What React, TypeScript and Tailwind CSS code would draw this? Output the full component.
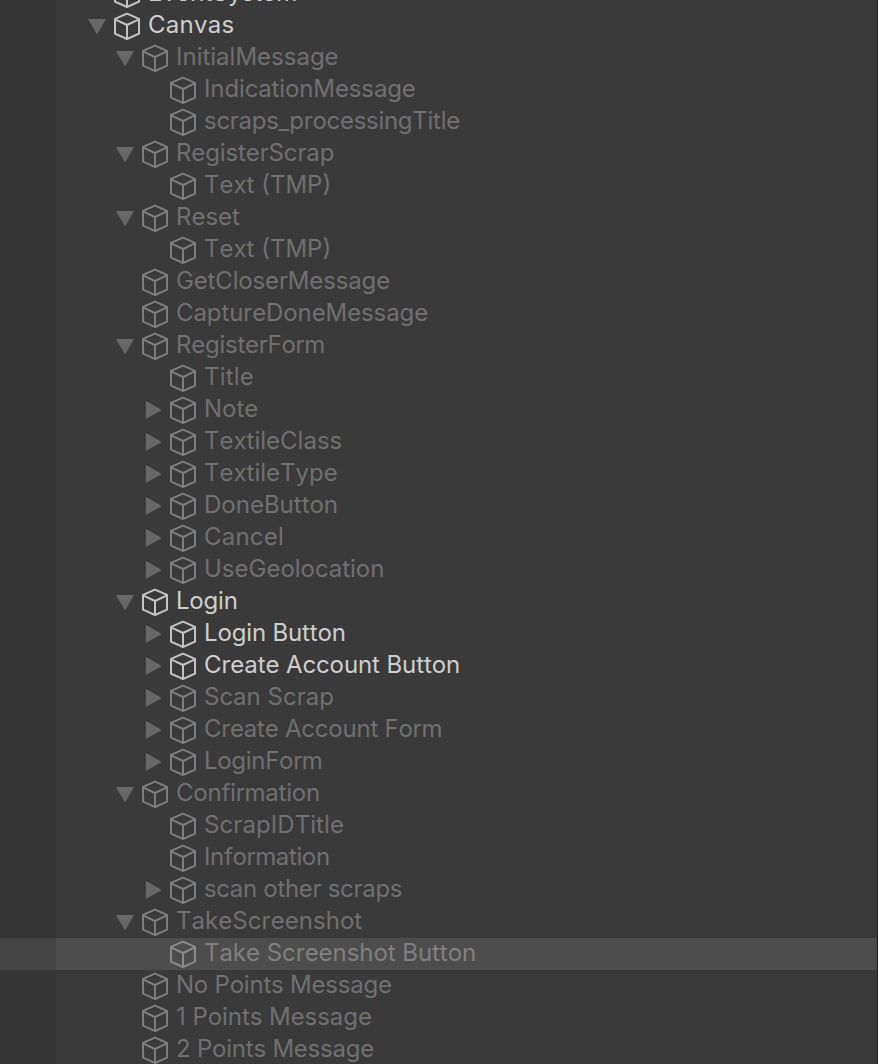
type Arrow = 'down' | 'right' | 'none';

interface Item {
  name: string;
  depth: 0 | 1 | 2;
  arrow?: Arrow;
  active?: boolean;
  selected?: boolean;
  tracking?: string;
}

const items: Item[] = [
  { name: 'EventSystem', depth: 0, active: true, tracking: 'tracking-[0.1px]' },
  { name: 'Canvas', depth: 0, arrow: 'down', active: true, tracking: 'tracking-[0.25px]' },
  { name: 'InitialMessage', depth: 1, arrow: 'down' },
  { name: 'IndicationMessage', depth: 2, tracking: 'tracking-[-0.12px]' },
  { name: 'scraps_processingTitle', depth: 2, tracking: 'tracking-[-0.28px]' },
  { name: 'RegisterScrap', depth: 1, arrow: 'down', tracking: 'tracking-[-0.12px]' },
  { name: 'Text (TMP)', depth: 2 },
  { name: 'Reset', depth: 1, arrow: 'down' },
  { name: 'Text (TMP)', depth: 2 },
  { name: 'GetCloserMessage', depth: 1, tracking: 'tracking-[-0.15px]' },
  { name: 'CaptureDoneMessage', depth: 1, tracking: 'tracking-[-0.1px]' },
  { name: 'RegisterForm', depth: 1, arrow: 'down', tracking: 'tracking-[-0.25px]' },
  { name: 'Title', depth: 2, tracking: 'tracking-[0.2px]' },
  { name: 'Note', depth: 2, arrow: 'right' },
  { name: 'TextileClass', depth: 2, arrow: 'right' },
  { name: 'TextileType', depth: 2, arrow: 'right' },
  { name: 'DoneButton', depth: 2, arrow: 'right' },
  { name: 'Cancel', depth: 2, arrow: 'right', tracking: 'tracking-[0.2px]' },
  { name: 'UseGeolocation', depth: 2, arrow: 'right' },
  { name: 'Login', depth: 1, arrow: 'down', active: true, tracking: 'tracking-[-0.2px]' },
  { name: 'Login Button', depth: 2, arrow: 'right', active: true, tracking: 'tracking-[-0.15px]' },
  { name: 'Create Account Button', depth: 2, arrow: 'right', active: true, tracking: 'tracking-[-0.1px]' },
  { name: 'Scan Scrap', depth: 2, arrow: 'right' },
  { name: 'Create Account Form', depth: 2, arrow: 'right', tracking: 'tracking-[-0.23px]' },
  { name: 'LoginForm', depth: 2, arrow: 'right', tracking: 'tracking-[-0.3px]' },
  { name: 'Confirmation', depth: 1, arrow: 'down', tracking: 'tracking-[-0.22px]' },
  { name: 'ScrapIDTitle', depth: 2, tracking: 'tracking-[0.08px]' },
  { name: 'Information', depth: 2, tracking: 'tracking-[-0.36px]' },
  { name: 'scan other scraps', depth: 2, arrow: 'right', tracking: 'tracking-[-0.3px]' },
  { name: 'TakeScreenshot', depth: 1, arrow: 'down', tracking: 'tracking-[0.05px]' },
  { name: 'Take Screenshot Button', depth: 2, selected: true, tracking: 'tracking-[-0.05px]' },
  { name: 'No Points Message', depth: 1, tracking: 'tracking-[-0.22px]' },
  { name: '1 Points Message', depth: 1, tracking: 'tracking-[-0.05px]' },
  { name: '2 Points Message', depth: 1, tracking: 'tracking-[-0.22px]' },
];

const indent = ['pl-8', 'pl-[60px]', 'pl-[88px]'];

function Foldout({ arrow }: { arrow: Arrow }) {
  return (
    <svg className="h-8 w-[26px] shrink-0 fill-[#686868]" viewBox="0 0 26 32">
      {arrow === 'down' && <path d="M0 9H18L9 24.6Z" />}
      {arrow === 'right' && <path d="M1.8 6.8V25L17.7 15.9Z" />}
    </svg>
  );
}

function Cube({ color }: { color: string }) {
  return (
    <svg
      className={`h-8 w-[26px] shrink-0 fill-none ${color}`}
      viewBox="0 0 26 32"
      strokeWidth="2"
      strokeLinejoin="round"
    >
      <path d="M13 3.7L25 8.9V23.7L13 29L1 23.7V8.9Z" />
      <path d="M1 9.3L13 15L25 9.3M13 15V29" />
    </svg>
  );
}

function Row({ item }: { item: Item }) {
  const text = item.active ? 'text-[#cecece]' : item.selected ? 'text-[#808080]' : 'text-[#707070]';
  const stroke = item.active ? 'stroke-[#c4c4c4]' : item.selected ? 'stroke-[#8a8a8a]' : 'stroke-[#7e7e7e]';
  return (
    <li className="flex h-8 shrink-0">
      <div className={`w-14 shrink-0 ${item.selected ? 'bg-[#444444]' : 'bg-[#353535]'}`} />
      <div
        className={`flex flex-1 items-center ${indent[item.depth]} ${item.selected ? 'bg-[#4d4d4d]' : 'bg-[#3a3a3a]'}`}
      >
        <Foldout arrow={item.arrow ?? 'none'} />
        <Cube color={stroke} />
        <span
          className={`ml-2 whitespace-pre pb-0.5 text-2xl leading-[30px] [font-kerning:none] ${text} ${item.tracking ?? 'tracking-normal'}`}
        >
          {item.name}
        </span>
      </div>
    </li>
  );
}

export default function App() {
  return (
    <div className="h-[1064px] w-[878px] overflow-hidden border-r border-[#202020] bg-[#3a3a3a] font-['Inter',sans-serif]">
      <ul className="-mt-[22px] flex flex-col">
        {items.map((item, i) => (
          <Row key={i} item={item} />
        ))}
      </ul>
    </div>
  );
}
